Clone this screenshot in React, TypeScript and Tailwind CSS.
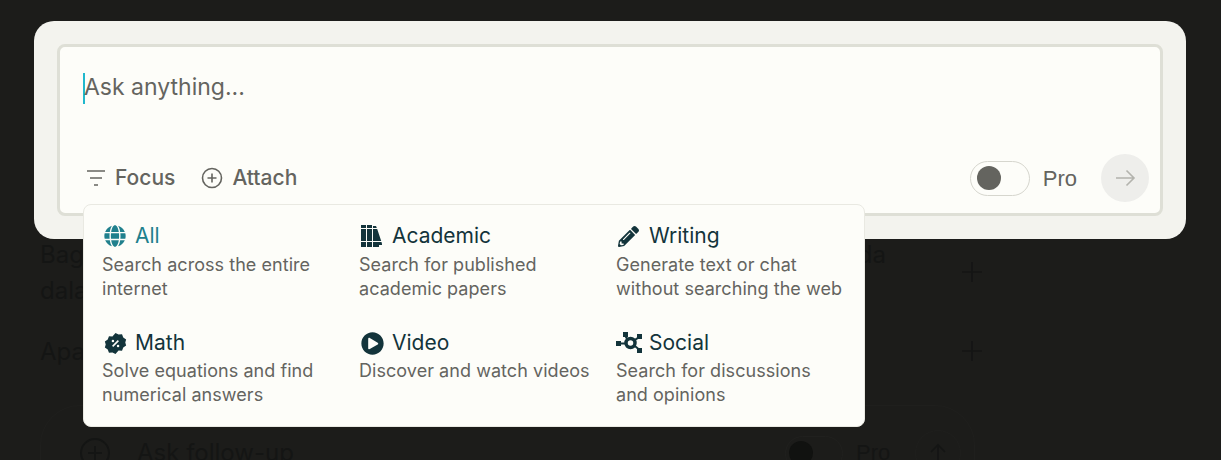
import { FaGlobe, FaPencilAlt, FaPlayCircle } from "react-icons/fa";

const font = "font-['Inter','Noto_Sans',sans-serif]";

function BooksIcon() {
  return (
    <svg width="24" height="24" viewBox="0 0 24 24" fill="currentColor" aria-hidden="true">
      <rect x="2" y="1" width="5" height="3" />
      <rect x="2" y="5" width="5" height="12" />
      <rect x="2" y="18" width="5" height="5" />
      <rect x="8" y="1" width="5" height="3" />
      <rect x="8" y="5" width="5" height="12" />
      <rect x="8" y="18" width="5" height="5" />
      <path d="M14 2h3l.8 2H14zM14 5h4.200l4 12H14zM14 18h8.500l.5 2v1h-3v2h-6z" />
    </svg>
  );
}

function BadgeIcon() {
  return (
    <svg width="23" height="23" viewBox="0 0 24 24" aria-hidden="true">
      <path
        fill="currentColor"
        d="M12 1l3.200 1.700 3.600-.3 1.300 3.400 3 2-.9 3.200.9 3.200-3 2-1.300 3.400-3.600-.3L12 23l-3.200-1.700-3.600.3-1.300-3.400-3-2 .9-3.200-.9-3.200 3-2 1.300-3.400 3.600.3z"
      />
      <path d="M9 15l6-6" stroke="#fdfdf9" strokeWidth="1.600" />
      <circle cx="9.300" cy="9.300" r="1.300" fill="#fdfdf9" />
      <circle cx="14.700" cy="14.700" r="1.300" fill="#fdfdf9" />
    </svg>
  );
}

function SocialIcon() {
  return (
    <svg width="27" height="22" viewBox="0 0 27 22" fill="currentColor" aria-hidden="true">
      <rect x="0" y="9" width="5" height="5" />
      <rect x="7" y="0" width="5" height="5" />
      <rect x="21" y="2" width="5" height="5" />
      <rect x="21" y="16" width="5" height="5" />
      <path d="M4 10.500h6v2H4zM10 3l3 5-1.800 1-3-5zM23 4l1 1.700-6 4-1-1.700zM18 12l6 5-1.200 1.500-6-5z" />
      <circle cx="14.500" cy="11" r="4.500" fill="none" stroke="currentColor" strokeWidth="3.500" />
    </svg>
  );
}

const items = [
  { title: "All", lines: ["Search across the entire", "internet"], icon: <FaGlobe size={22} />, active: true, cell: "pl-[2px]", gap: "mt-[3px]" },
  { title: "Academic", lines: ["Search for published", "academic papers"], icon: <BooksIcon />, active: false, cell: "", gap: "mt-[3px]" },
  { title: "Writing", lines: ["Generate text or chat", "without searching the web"], icon: <FaPencilAlt size={21} />, active: false, cell: "pl-[2px]", gap: "mt-[3px]" },
  { title: "Math", lines: ["Solve equations and find", "numerical answers"], icon: <BadgeIcon />, active: false, cell: "pl-[2px]", gap: "mt-[2px]" },
  { title: "Video", lines: ["Discover and watch videos"], icon: <FaPlayCircle size={23} />, active: false, cell: "pl-[2px]", gap: "mt-[2px]" },
  { title: "Social", lines: ["Search for discussions", "and opinions"], icon: <SocialIcon />, active: false, cell: "", gap: "mt-[2px]" },
];

function Plus() {
  return (
    <svg width="20" height="20" viewBox="0 0 20 20" fill="none" stroke="currentColor" strokeWidth="1.600" aria-hidden="true">
      <path d="M10 0v20M0 10h20" />
    </svg>
  );
}

export default function App() {
  return (
    <div className={`relative h-[460px] w-[1221px] overflow-hidden bg-[#1c1c1a] ${font}`}>
      {/* Dimmed page behind the search box */}
      <div className="flex h-full flex-col px-10 pt-[237px] text-[#141514]">
        <div className="flex items-start justify-between">
          <div className="w-[846px] text-[24px] leading-[36px]">
            <div className="flex justify-between">
              <span>Bagaimana</span>
              <span>ada</span>
            </div>
            <div>dalam</div>
          </div>
          <span className="mt-[25px] mr-[199px]">
            <Plus />
          </span>
        </div>
        <div className="mt-[25px] flex items-start justify-between">
          <span className="text-[24px] leading-[36px]">Apakah</span>
          <span className="mt-[7px] mr-[199px]">
            <Plus />
          </span>
        </div>
        <div className="mt-[35px] flex h-[96px] w-[935px] shrink-0 items-center rounded-[40px] border border-[#1f1f1d] pl-[39px] text-[24px] leading-[36px]">
          <svg className="mr-[27px]" width="30" height="30" viewBox="0 0 30 30" fill="none" stroke="currentColor" strokeWidth="2" aria-hidden="true">
            <circle cx="15" cy="15" r="14" />
            <path d="M15 8v14M8 15h14" />
          </svg>
          <span className="w-[648px]">Ask follow-up</span>
          <span className="flex h-[35px] w-[58px] items-center rounded-full border border-[#20201e] pl-[3px]">
            <span className="h-6 w-6 rounded-full bg-[#111210]" />
          </span>
          <span className="ml-[13px] font-['Liberation_Sans',sans-serif] text-[22px]">Pro</span>
          <span className="ml-[25px] flex h-[46px] w-[46px] items-center justify-center rounded-full border border-[#1f1f1d]">
            <svg width="20" height="20" viewBox="0 0 20 20" fill="none" stroke="currentColor" strokeWidth="1.600" aria-hidden="true">
              <path d="M10 19V2M3 9l7-7 7 7" />
            </svg>
          </span>
        </div>
      </div>

      {/* Search box */}
      <div className="absolute top-[21px] left-[34px] h-[218px] w-[1152px] rounded-[20px] bg-[#f3f3ee] p-[23px]">
        <div className="flex h-[172px] flex-col rounded-[8px] border-[3px] border-[#dedfd6] bg-[#fdfdf9] pr-[11px] pb-[11px] pl-[23px]">
          <div className="flex flex-1 items-start pt-[26px]">
            <span className="h-[31px] w-[2px] bg-[#20b8cd]" />
            <span className="-mt-[1px] -ml-[1px] text-[23px] leading-[30px] text-[#64645f]">Ask anything...</span>
          </div>
          <div className="flex items-center justify-between text-[#64645f]">
            <div className="flex items-center gap-[26px] pl-[4px] text-[21px] font-medium">
              <div className="flex items-center gap-[10px]">
                <svg width="18" height="16" viewBox="0 0 18 16" fill="none" stroke="currentColor" strokeWidth="1.600" aria-hidden="true">
                  <path d="M0 1h18M3 8h12M7 15h4" />
                </svg>
                <span>Focus</span>
              </div>
              <div className="flex items-center gap-[9px]">
                <svg width="22" height="22" viewBox="0 0 22 22" fill="none" stroke="currentColor" strokeWidth="1.600" aria-hidden="true">
                  <circle cx="11" cy="11" r="9.500" />
                  <path d="M11 6.500v9M6.500 11h9" />
                </svg>
                <span>Attach</span>
              </div>
            </div>
            <div className="flex items-center">
              <div className="flex h-[35px] w-[60px] items-center rounded-full border border-[#d6d6ce] bg-[#fdfdf9] pl-[6px]">
                <span className="h-6 w-6 rounded-full bg-[#64645f]" />
              </div>
              <span className="mr-[24px] ml-[13px] font-['Liberation_Sans',sans-serif] text-[22px]">Pro</span>
              <div className="flex h-12 w-12 items-center justify-center rounded-full bg-[#eeeeeb] text-[#b3b3ad]">
                <svg width="22" height="22" viewBox="0 0 22 22" fill="none" stroke="currentColor" strokeWidth="1.600" aria-hidden="true">
                  <path d="M2 11h18M12.500 3.500 20 11l-7.500 7.500" />
                </svg>
              </div>
            </div>
          </div>
        </div>
      </div>

      {/* Focus menu */}
      <div className="absolute top-[204px] left-[83px] grid h-[223px] w-[782px] grid-cols-[257px_257px_230px] content-start rounded-[8px] border border-[#e9e9e2] bg-[#fdfdf9] pt-[17px] pl-[18px]">
        {items.map((it) => (
          <div key={it.title} className="h-[107px]">
            <div className={`flex h-[28px] items-center text-[21px] ${it.active ? "text-[#20808d]" : "text-[#13343b]"}`}>
              <span className={`flex w-[33px] shrink-0 items-center ${it.cell}`}>{it.icon}</span>
              <span>{it.title}</span>
            </div>
            <p className={`${it.gap} text-[18px] leading-[24px] tracking-[0.05px] whitespace-nowrap text-[#64645f]`}>
              {it.lines.map((line) => (
                <span key={line} className="block">
                  {line}
                </span>
              ))}
            </p>
          </div>
        ))}
      </div>
    </div>
  );
}
